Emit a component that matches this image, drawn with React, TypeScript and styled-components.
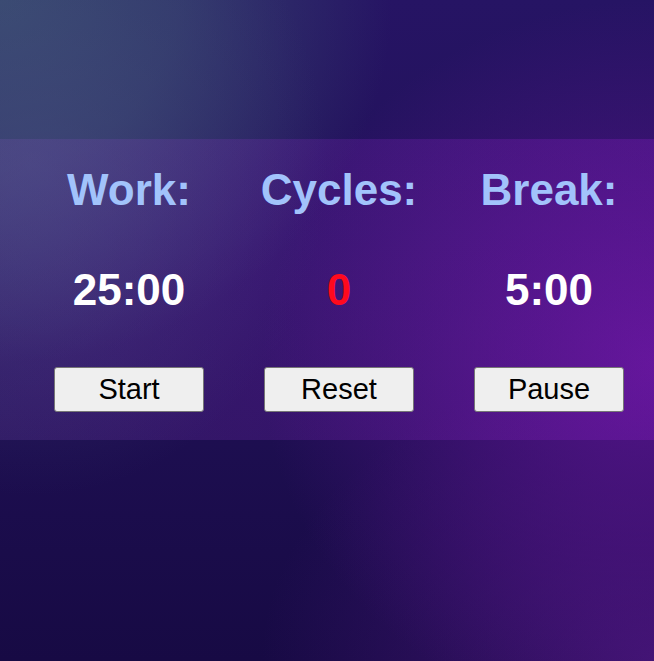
import React from "react";
import styled, { createGlobalStyle } from "styled-components";

const GlobalStyle = createGlobalStyle`
  html, body {
    margin: 0;
    padding: 0;
    height: 100%;
  }
  body {
    font-family: "Liberation Sans", Arial, sans-serif;
    background-color: #1c0c4e;
    background-image:
      radial-gradient(ellipse 45% 50% at 5% 25%, rgba(70, 78, 126, 0.5) 0%, rgba(70, 78, 126, 0.2) 55%, rgba(70, 78, 126, 0) 100%),
      radial-gradient(ellipse 60% 55% at 0% 0%, rgba(56, 74, 112, 1) 0%, rgba(56, 74, 112, 0.7) 45%, rgba(56, 74, 112, 0) 100%),
      radial-gradient(ellipse 60% 55% at 100% 55%, rgba(88, 20, 142, 0.9) 0%, rgba(88, 20, 142, 0) 100%),
      radial-gradient(ellipse 60% 45% at 100% 100%, rgba(70, 22, 120, 0.85) 0%, rgba(70, 22, 120, 0) 100%),
      linear-gradient(180deg, #261464 0%, #211158 45%, #170a44 100%);
    background-attachment: fixed;
  }
  #root {
    min-height: 100vh;
  }
`;

const Page = styled.main`
  min-height: 100vh;
  padding-top: 139px;
  box-sizing: border-box;
`;

const Panel = styled.section`
  background: linear-gradient(90deg, rgba(150, 90, 210, 0.16) 0%, rgba(150, 40, 210, 0.2) 50%, rgba(160, 30, 220, 0.24) 100%);
  padding: 26px 0 28px 24px;
  display: grid;
  grid-template-columns: repeat(3, 210px);
`;

const Column = styled.div`
  display: flex;
  flex-direction: column;
  align-items: center;
`;

const Label = styled.h2`
  margin: 0;
  font-size: 44px;
  line-height: 49px;
  font-weight: 700;
  color: #a2c3fb;
`;

const Value = styled.div<{ $accent?: boolean }>`
  margin-top: 51px;
  font-size: 44px;
  line-height: 49px;
  font-weight: 700;
  color: ${(p) => (p.$accent ? "#ff0a1e" : "#ffffff")};
`;

const Button = styled.button`
  margin-top: 53px;
  width: 150px;
  height: 45px;
  padding: 0;
  font-family: "Liberation Sans", Arial, sans-serif;
  font-size: 29px;
  color: #000;
  background: #efefef;
  border: 1px solid #767676;
  border-radius: 3px;
  cursor: pointer;
`;

export default function App() {
  const items = [
    { label: "Work:", value: "25:00", action: "Start" },
    { label: "Cycles:", value: "0", action: "Reset", accent: true },
    { label: "Break:", value: "5:00", action: "Pause" },
  ];
  return (
    <>
      <GlobalStyle />
      <Page>
        <Panel>
          {items.map((it) => (
            <Column key={it.label}>
              <Label>{it.label}</Label>
              <Value $accent={it.accent}>{it.value}</Value>
              <Button>{it.action}</Button>
            </Column>
          ))}
        </Panel>
      </Page>
    </>
  );
}
